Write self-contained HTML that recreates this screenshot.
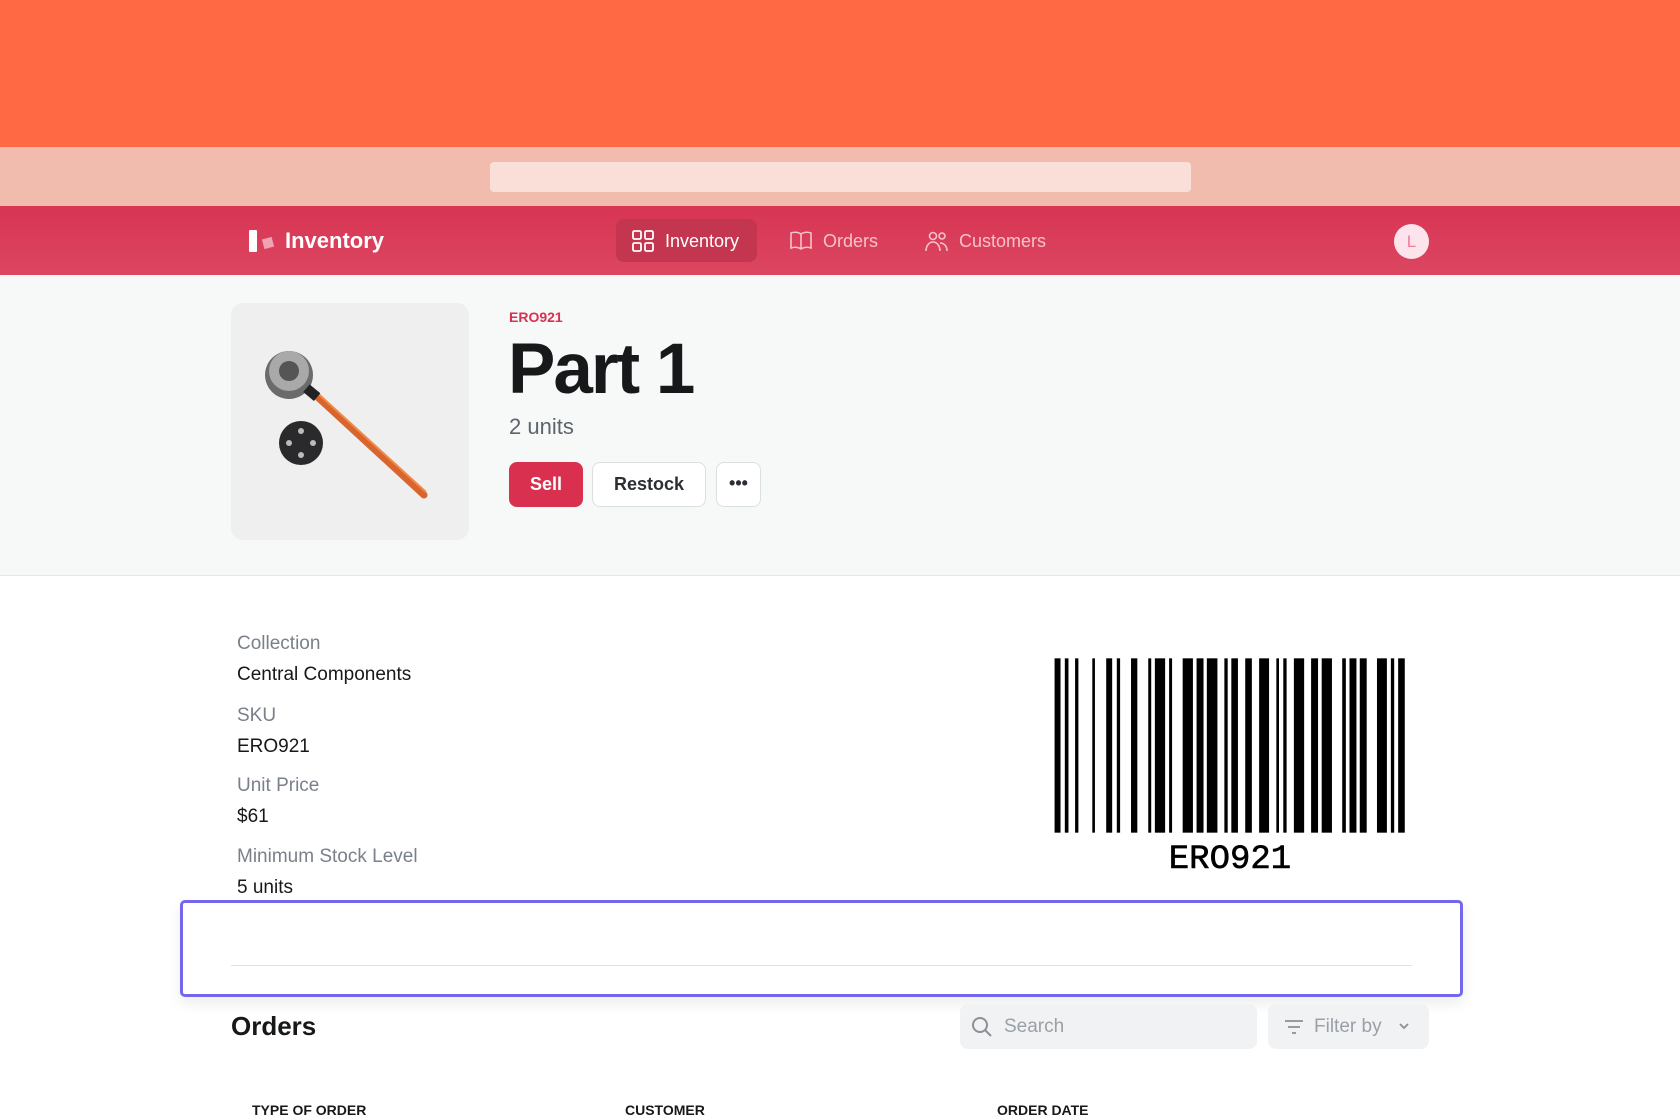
<!DOCTYPE html>
<html><head><meta charset="utf-8"><style>
*{box-sizing:border-box;margin:0;padding:0}
body{width:1680px;height:1120px;overflow:hidden;background:#fff;font-family:"Liberation Sans",sans-serif;position:relative}
.a{position:absolute}
.t{position:absolute;white-space:nowrap;line-height:1}
</style></head><body>
<div class="a" style="left:0;top:0;width:1680px;height:147px;background:#ff6a45"></div>
<div class="a" style="left:0;top:147px;width:1680px;height:59px;background:#f1bcae"></div>
<div class="a" style="left:490px;top:162px;width:701px;height:30px;background:#fadfd8;border-radius:4px"></div>
<div class="a" style="left:0;top:206px;width:1680px;height:69px;background:linear-gradient(#d73553,#dc4660)"></div>
<div class="a" style="left:249px;top:230px;width:8px;height:22px;background:#fff;border-radius:1px"></div>
<div class="a" style="left:263px;top:238px;width:10px;height:10px;background:#f2a3b0;transform:rotate(-15deg)"></div>
<div class="t" style="left:285px;top:230px;font-size:22px;font-weight:bold;color:#fff">Inventory</div>
<div class="a" style="left:616px;top:219px;width:141px;height:43px;background:#c4364f;border-radius:8px"></div>
<svg class="a" style="left:632px;top:230px" width="22" height="22" viewBox="0 0 22 22" fill="none" stroke="#fff" stroke-width="1.8"><rect x="1" y="1" width="8" height="8" rx="1.5"/><rect x="13" y="1" width="8" height="8" rx="1.5"/><rect x="1" y="13" width="8" height="8" rx="1.5"/><rect x="13" y="13" width="8" height="8" rx="1.5"/></svg>
<div class="t" style="left:665px;top:232px;font-size:18px;color:#fff">Inventory</div>
<svg class="a" style="left:789px;top:230px" width="24" height="22" viewBox="0 0 24 22" fill="none" stroke="#f6c2cb" stroke-width="1.6"><path d="M12 4C9 2 5 2 2 3v15c3-1 7-1 10 1 3-2 7-2 10-1V3c-3-1-7-1-10 1zM12 4v15"/></svg>
<div class="t" style="left:823px;top:232px;font-size:18px;color:#f6c2cb">Orders</div>
<svg class="a" style="left:925px;top:230px" width="24" height="22" viewBox="0 0 24 22" fill="none" stroke="#f6c2cb" stroke-width="1.6"><circle cx="8" cy="6" r="3.5"/><circle cx="17" cy="6" r="3"/><path d="M1 21c0-5 3-9 7-9s7 4 7 9M15 13c4 0 7 3 7 8"/></svg>
<div class="t" style="left:959px;top:232px;font-size:18px;color:#f6c2cb">Customers</div>
<div class="a" style="left:1394px;top:224px;width:35px;height:35px;border-radius:50%;background:#fde4ec;color:#f07e9a;font-size:17px;text-align:center;line-height:35px">L</div>
<div class="a" style="left:0;top:275px;width:1680px;height:301px;background:#f7f9f8;border-bottom:1px solid #e3e6e5"></div>
<div class="a" style="left:231px;top:303px;width:238px;height:237px;background:#efefef;border-radius:12px;overflow:hidden">
<svg width="238" height="237" viewBox="0 0 238 237"><path d="M80 88 L193 192" stroke="#d8652e" stroke-width="7" stroke-linecap="round"/><path d="M82 86 L195 189" stroke="#f08b4a" stroke-width="2"/><circle cx="58" cy="72" r="24" fill="#6b6b6b"/><circle cx="58" cy="68" r="20" fill="#a9a9a9"/><circle cx="58" cy="68" r="10" fill="#555"/><rect x="74" y="84" width="14" height="10" fill="#222" transform="rotate(40 80 89)"/><circle cx="70" cy="140" r="22" fill="#2a2a2c"/><circle cx="70" cy="128" r="3" fill="#bbb"/><circle cx="58" cy="140" r="3" fill="#bbb"/><circle cx="82" cy="140" r="3" fill="#bbb"/><circle cx="70" cy="152" r="3" fill="#bbb"/></svg></div>
<div class="t" style="left:509px;top:310px;font-size:14px;font-weight:bold;color:#d9304f">ERO921</div>
<div class="t" style="left:508px;top:334px;font-size:71px;font-weight:bold;color:#16181a;letter-spacing:-2px">Part 1</div>
<div class="t" style="left:509px;top:416px;font-size:22px;color:#5e646c">2 units</div>
<div class="a" style="left:509px;top:462px;width:74px;height:45px;background:#d9304f;border-radius:8px;color:#fff;font-size:18px;font-weight:bold;text-align:center;line-height:45px">Sell</div>
<div class="a" style="left:592px;top:462px;width:114px;height:45px;background:#fff;border:1px solid #dcdfe2;border-radius:8px;color:#2b2e33;font-size:18px;font-weight:bold;text-align:center;line-height:43px">Restock</div>
<div class="a" style="left:716px;top:462px;width:45px;height:45px;background:#fff;border:1px solid #dcdfe2;border-radius:8px;color:#2b2e33;font-size:18px;font-weight:bold;text-align:center;line-height:40px">•••</div>
<div class="t" style="left:237px;top:634px;font-size:19px;color:#7a808a">Collection</div>
<div class="t" style="left:237px;top:665px;font-size:19px;color:#16181a">Central Components</div>
<div class="t" style="left:237px;top:706px;font-size:19px;color:#7a808a">SKU</div>
<div class="t" style="left:237px;top:737px;font-size:19px;color:#16181a">ERO921</div>
<div class="t" style="left:237px;top:776px;font-size:19px;color:#7a808a">Unit Price</div>
<div class="t" style="left:237px;top:807px;font-size:19px;color:#16181a">$61</div>
<div class="t" style="left:237px;top:847px;font-size:19px;color:#7a808a">Minimum Stock Level</div>
<div class="t" style="left:237px;top:878px;font-size:19px;color:#16181a">5 units</div>
<svg class="a" style="left:1040px;top:650px" width="380" height="230" viewBox="0 0 1148 690" preserveAspectRatio="none"><g fill="#000">
<rect x="44" y="25" width="18" height="523"/><rect x="75" y="25" width="11" height="523"/><rect x="106" y="25" width="10" height="523"/><rect x="158" y="25" width="8" height="523"/><rect x="200" y="25" width="18" height="523"/><rect x="232" y="25" width="10" height="523"/><rect x="275" y="25" width="19" height="523"/><rect x="327" y="25" width="9" height="523"/><rect x="347" y="25" width="31" height="523"/><rect x="390" y="25" width="9" height="523"/><rect x="431" y="25" width="31" height="523"/><rect x="473" y="25" width="21" height="523"/><rect x="504" y="25" width="32" height="523"/><rect x="557" y="25" width="10" height="523"/><rect x="578" y="25" width="20" height="523"/><rect x="620" y="25" width="20" height="523"/><rect x="662" y="25" width="30" height="523"/><rect x="714" y="25" width="8" height="523"/><rect x="735" y="25" width="10" height="523"/><rect x="767" y="25" width="31" height="523"/><rect x="819" y="25" width="21" height="523"/><rect x="851" y="25" width="31" height="523"/><rect x="913" y="25" width="11" height="523"/><rect x="935" y="25" width="21" height="523"/><rect x="966" y="25" width="21" height="523"/><rect x="1018" y="25" width="30" height="523"/><rect x="1060" y="25" width="10" height="523"/><rect x="1082" y="25" width="20" height="523"/></g></svg>
<div class="t" style="left:1110px;top:843px;width:240px;text-align:center;font-family:'Liberation Mono',monospace;font-size:34px;color:#000;-webkit-text-stroke:0.6px #000">ERO921</div>
<div class="a" style="left:180px;top:900px;width:1283px;height:97px;border:3px solid #7367ee;border-radius:5px;background:#fff;box-shadow:0 6px 14px rgba(0,0,0,.08)"></div>
<div class="a" style="left:231px;top:965px;width:1181px;height:1px;background:#dfe4e3"></div>
<div class="t" style="left:231px;top:1013px;font-size:26px;font-weight:bold;color:#16181a">Orders</div>
<div class="a" style="left:960px;top:1004px;width:297px;height:45px;background:#f1f2f3;border-radius:8px"></div>
<svg class="a" style="left:971px;top:1016px" width="22" height="22" viewBox="0 0 22 22" fill="none" stroke="#8b9097" stroke-width="2"><circle cx="9" cy="9" r="7"/><path d="M14 14l6 6"/></svg>
<div class="t" style="left:1004px;top:1017px;font-size:19px;color:#9aa0a7">Search</div>
<div class="a" style="left:1268px;top:1004px;width:161px;height:45px;background:#f1f2f3;border-radius:8px"></div>
<svg class="a" style="left:1284px;top:1018px" width="20" height="18" viewBox="0 0 20 18" fill="none" stroke="#8b9097" stroke-width="1.8"><path d="M1 3h18M4 9h12M8 15h4"/></svg>
<div class="t" style="left:1314px;top:1017px;font-size:19px;color:#9aa0a7">Filter by</div>
<svg class="a" style="left:1398px;top:1021px" width="12" height="10" viewBox="0 0 12 10" fill="none" stroke="#8b9097" stroke-width="1.8"><path d="M2 3l4 4 4-4"/></svg>
<div class="t" style="left:252px;top:1103px;font-size:14px;font-weight:bold;color:#16181a">TYPE OF ORDER</div>
<div class="t" style="left:625px;top:1103px;font-size:14px;font-weight:bold;color:#16181a">CUSTOMER</div>
<div class="t" style="left:997px;top:1103px;font-size:14px;font-weight:bold;color:#16181a">ORDER DATE</div>
</body></html>
